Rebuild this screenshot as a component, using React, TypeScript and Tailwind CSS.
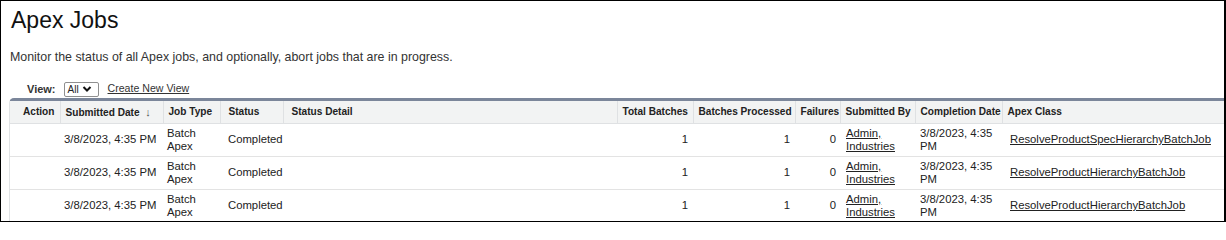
import React from "react";

type Job = {
  submitted: string;
  jobType: string;
  status: string;
  total: number;
  processed: number;
  failures: number;
  by: string;
  completed: string;
  apexClass: string;
};

const jobs: Job[] = [
  { submitted: "3/8/2023, 4:35 PM", jobType: "Batch Apex", status: "Completed", total: 1, processed: 1, failures: 0, by: "Admin, Industries", completed: "3/8/2023, 4:35 PM", apexClass: "ResolveProductSpecHierarchyBatchJob" },
  { submitted: "3/8/2023, 4:35 PM", jobType: "Batch Apex", status: "Completed", total: 1, processed: 1, failures: 0, by: "Admin, Industries", completed: "3/8/2023, 4:35 PM", apexClass: "ResolveProductHierarchyBatchJob" },
  { submitted: "3/8/2023, 4:35 PM", jobType: "Batch Apex", status: "Completed", total: 1, processed: 1, failures: 0, by: "Admin, Industries", completed: "3/8/2023, 4:35 PM", apexClass: "ResolveProductHierarchyBatchJob" },
];

const th = "h-[22px] px-[5px] text-left align-middle font-bold text-[10.1px] text-[#222] border-l border-[#dfe1e3] whitespace-nowrap";
const td = "h-[33px] px-[4px] align-middle text-[11.3px] leading-[13px] text-[#222] border-b border-[#e3e3e3]";

export default function App() {
  return (
    <div className="w-[1226px] h-[222px] overflow-hidden bg-white border border-black border-r-2 font-['Liberation_Sans',Arial,sans-serif]">
      <h1 className="pl-[10px] pt-[4px] text-[23px] leading-[30px] text-[#111]">Apex Jobs</h1>
      <p className="pl-[9px] mt-[14px] text-[12.4px] leading-[16px] text-[#333]">
        Monitor the status of all Apex jobs, and optionally, abort jobs that are in progress.
      </p>

      <div className="mt-[16px] h-[16px] pl-[26px] flex items-center text-[11px] text-[#333]">
        <span className="font-bold mr-[8px]">View:</span>
        <div className="h-[15px] w-[35px] border border-[#8f8f8f] rounded-[2px] flex items-center pl-[3px] gap-[3px] text-[10px] text-[#222]">
          <span>All</span>
          <svg width="10" height="8" viewBox="0 0 10 8">
            <path d="M1.5 2 L5 5.5 L8.5 2" fill="none" stroke="#111" strokeWidth="2" />
          </svg>
        </div>
        <a className="ml-[9px] underline text-[#333] text-[10.6px]">Create New View</a>
      </div>

      <div className="mt-[1px] ml-[8px] w-[1260px] border-t-[3px] border-t-[#7b869a] border-l border-l-[#e0e3e5] rounded-tl-[5px]">
        <table className="table-fixed border-collapse w-[1259px]">
          <colgroup>
            <col className="w-[50px]" />
            <col className="w-[103px]" />
            <col className="w-[57px]" />
            <col className="w-[63px]" />
            <col className="w-[334px]" />
            <col className="w-[76px]" />
            <col className="w-[102px]" />
            <col className="w-[45px]" />
            <col className="w-[75px]" />
            <col className="w-[87px]" />
            <col className="w-[267px]" />
          </colgroup>
          <thead>
            <tr className="bg-[#f2f3f3] border-b border-[#dfe1e3]">
              <th className="h-[22px] pl-[13px] text-left align-middle font-bold text-[10.1px] text-[#222]">Action</th>
              <th className={th}>
                Submitted Date <span className="ml-[3px] font-normal text-[#555] text-[11px]">↓</span>
              </th>
              <th className={th}>Job Type</th>
              <th className={th + " !pl-[8px]"}>Status</th>
              <th className={th + " !pl-[8px]"}>Status Detail</th>
              <th className={th}>Total Batches</th>
              <th className={th}>Batches Processed</th>
              <th className={th}>Failures</th>
              <th className={th}>Submitted By</th>
              <th className={th}>Completion Date</th>
              <th className={th}>Apex Class</th>
            </tr>
          </thead>
          <tbody>
            {jobs.map((j, i) => (
              <tr key={i}>
                <td className={td}></td>
                <td className={td + " whitespace-nowrap"}>{j.submitted}</td>
                <td className={td}>{j.jobType}</td>
                <td className={td + " !pl-[8px]"}>{j.status}</td>
                <td className={td}></td>
                <td className={td + " text-right !pr-[5px]"}>{j.total}</td>
                <td className={td + " text-right !pr-[5px]"}>{j.processed}</td>
                <td className={td + " text-right !pr-[4px]"}>{j.failures}</td>
                <td className={td + " !pl-[6px]"}>
                  <a className="underline text-[#222]">{j.by}</a>
                </td>
                <td className={td + " !pl-[5px]"}>{j.completed}</td>
                <td className={td + " !pl-[8px] whitespace-nowrap"}>
                  <a className="underline text-[#222]">{j.apexClass}</a>
                </td>
              </tr>
            ))}
          </tbody>
        </table>
      </div>
    </div>
  );
}
